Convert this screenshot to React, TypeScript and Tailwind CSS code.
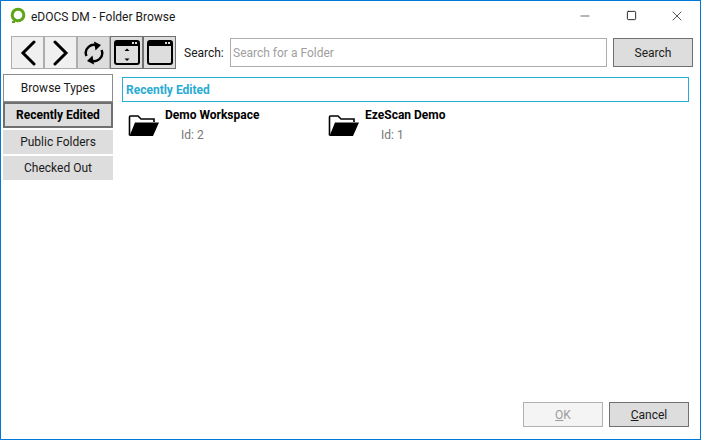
import { Minus, Square, X } from 'lucide-react';

function Back() {
  return (
    <svg width="18" height="26" viewBox="0 0 18 26" fill="none" stroke="#000" strokeWidth="3">
      <path d="M15 2 L4 13 L15 24" strokeLinecap="round" />
    </svg>
  );
}

function Forward() {
  return (
    <svg width="18" height="26" viewBox="0 0 18 26" fill="none" stroke="#000" strokeWidth="3">
      <path d="M3 2 L14 13 L3 24" strokeLinecap="round" />
    </svg>
  );
}

function Refresh() {
  return (
    <svg width="22" height="24" viewBox="0 0 22 24" fill="none" stroke="#000" strokeWidth="2.4">
      <path d="M3.5 15 A8 8 0 0 1 15 5" />
      <path d="M18.5 9 A8 8 0 0 1 7 19" />
      <path d="M11 0.5 L18 4 L12.5 9.5 Z" fill="#000" stroke="none" />
      <path d="M11 23.5 L4 20 L9.5 14.5 Z" fill="#000" stroke="none" />
    </svg>
  );
}

function WindowIcon({ arrows }: { arrows?: boolean }) {
  return (
    <svg width="26" height="25" viewBox="0 0 26 25">
      <rect x="1" y="1" width="24" height="23" rx="2" fill="none" stroke="#000" strokeWidth="2" />
      <rect x="1" y="1" width="24" height="5" fill="#000" />
      <rect x="18" y="2" width="2" height="2" fill="#ddd" />
      <rect x="21" y="2" width="2" height="2" fill="#ddd" />
      {arrows && (
        <>
          <path d="M13 8.5 L15.5 11 L10.5 11 Z" fill="#000" />
          <path d="M13 21 L15.5 18.5 L10.5 18.5 Z" fill="#000" />
        </>
      )}
    </svg>
  );
}

function Folder() {
  return (
    <svg width="32" height="22" viewBox="0 0 32 22">
      <path d="M1.5 20.5 V2 Q1.5 1 2.5 1 H10 L13 4 H26 V7" fill="#fff" stroke="#000" strokeWidth="1.6" />
      <path d="M1.5 21 L7 7.5 H31 L25 21 Z" fill="#000" />
    </svg>
  );
}

const items = [
  { name: 'Demo Workspace', id: 2 },
  { name: 'EzeScan Demo', id: 1 },
];

export default function App() {
  return (
    <div className="w-[701px] h-[440px] flex flex-col bg-white border border-[#0078d7] overflow-hidden text-[12px] text-[#1a1a1a] font-['Roboto',sans-serif]">
      <div className="h-[29px] flex items-center shrink-0">
        <svg width="16" height="18" viewBox="0 0 16 18" className="ml-[9px] mt-[1px]">
          <circle cx="8" cy="8" r="5.8" fill="#fff" stroke="#5ea51a" strokeWidth="3" />
          <rect x="2" y="14" width="3" height="2" fill="#5ea51a" />
        </svg>
        <span className="ml-[5px] mt-[2px] text-[12px]">eDOCS DM - Folder Browse</span>
        <div className="ml-auto flex h-full text-black">
          <div className="w-[46px] flex items-center justify-center"><Minus size={14} strokeWidth={1} /></div>
          <div className="w-[46px] flex items-center justify-center"><Square size={11} strokeWidth={1.8} /></div>
          <div className="w-[46px] flex items-center justify-center"><X size={16} strokeWidth={1} /></div>
        </div>
      </div>

      <div className="h-[33px] ml-[10px] mt-[6px] mr-[7px] flex items-center shrink-0">
        <div className="w-[33px] h-[33px] flex items-center justify-center bg-[#f0f0f0] border border-[#adadad]"><Back /></div>
        <div className="w-[33px] h-[33px] flex items-center justify-center bg-[#f0f0f0] border border-[#adadad]"><Forward /></div>
        <div className="w-[33px] h-[33px] flex items-center justify-center bg-[#dddddd] border border-[#adadad]"><Refresh /></div>
        <div className="w-[33px] h-[33px] flex items-center justify-center bg-[#dddddd] border border-[#707070]"><WindowIcon arrows /></div>
        <div className="w-[33px] h-[33px] flex items-center justify-center bg-[#dddddd] border border-[#707070]"><WindowIcon /></div>
        <span className="ml-[8px] w-[46px]">Search:</span>
        <div className="w-[377px] h-[29px] border border-[#abadb3] flex items-center pl-[2px] text-[#a0a0a0]">Search for a Folder</div>
        <div className="ml-[6px] w-[80px] h-[29px] bg-[#dddddd] border border-[#707070] flex items-center justify-center">Search</div>
      </div>

      <div className="flex-1 flex ml-[2px] mt-[5px]">
        <div className="w-[110px] flex flex-col items-stretch text-center">
          <div className="h-[28px] border border-[#8c8c8c] bg-white flex items-center justify-center">Browse Types</div>
          <div className="h-[26px] border-2 border-[#707070] bg-[#dddddd] flex items-center justify-center font-bold text-black">Recently Edited</div>
          <div className="h-[24px] mt-[2px] bg-[#dddddd] flex items-center justify-center">Public Folders</div>
          <div className="h-[24px] mt-[2px] bg-[#dddddd] flex items-center justify-center">Checked Out</div>
        </div>
        <div className="flex-1 ml-[9px] mr-[11px] flex flex-col">
          <div className="h-[25px] mt-[3px] border border-[#29abd4] text-[#29abd4] font-bold flex items-center pl-[3px]">Recently Edited</div>
          <div className="flex mt-[5px] ml-[6px]">
            {items.map((item) => (
              <div key={item.id} className="w-[200px] flex">
                <div className="mt-[8px]"><Folder /></div>
                <div className="ml-[5px]">
                  <div className="font-bold text-black leading-[16px]">{item.name}</div>
                  <div className="ml-[16px] mt-[4px] text-[#777777] leading-[16px]">Id: {item.id}</div>
                </div>
              </div>
            ))}
          </div>
        </div>
      </div>

      <div className="flex justify-end gap-[6px] mr-[11px] mb-[12px] shrink-0">
        <div className="w-[80px] h-[25px] bg-[#f4f4f4] border border-[#adb2b5] text-[#9a9a9a] flex items-center justify-center"><span><u>O</u>K</span></div>
        <div className="w-[80px] h-[25px] bg-[#dddddd] border border-[#707070] flex items-center justify-center"><span><u>C</u>ancel</span></div>
      </div>
    </div>
  );
}
